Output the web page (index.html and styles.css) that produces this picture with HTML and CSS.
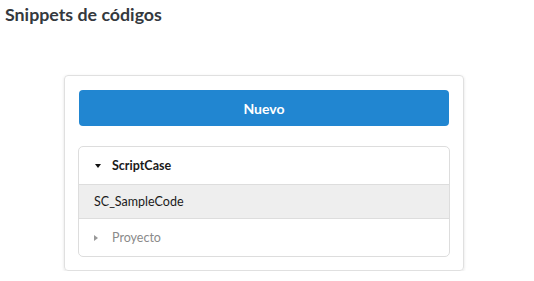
FILE: index.html
```html
<!DOCTYPE html>
<html lang="es">
<head>
    <meta charset="UTF-8">
    <title>Snippets de códigos</title>
    <link rel="stylesheet" href="styles.css">
</head>
<body>
    <h1 class="page-title">Snippets de códigos</h1>

    <div class="snippet-card">
        <button class="new-btn">Nuevo</button>

        <div class="tree">
            <div class="tree-row tree-head">
                <span class="caret caret-down"></span>
                ScriptCase
            </div>
            <div class="tree-row tree-item">SC_SampleCode</div>
            <div class="tree-row tree-closed">
                <span class="caret caret-right"></span>
                Proyecto
            </div>
        </div>
    </div>
</body>
</html>
```

FILE: styles.css
```css
body {
    font-family: Lato, 'Open Sans', Arial, sans-serif;
    margin: 0;
    padding: 0;
    background: #fff;
    color: #222;
}
.page-title {
    font-size: 17.8px;
    font-weight: 700;
    color: #34393e;
    margin: 0;
    padding: 3px 0 0 5px;
    line-height: 22px;
}
.snippet-card {
    width: 372px;
    margin: 50px 0 0 64px;
    padding: 14px 13px 13px 13px;
    border: 1px solid #e0e0e0;
    border-radius: 4px;
    box-shadow: 0 1px 3px rgba(0,0,0,0.12);
}
.new-btn {
    display: block;
    width: 370px;
    height: 36px;
    margin: 0 1px 20px 1px;
    border: none;
    border-radius: 4px;
    background: #2186d1;
    color: #fff;
    font-family: inherit;
    font-size: 14px;
    font-weight: 700;
}
.tree {
    border: 1px solid #ddd;
    border-radius: 5px;
    overflow: hidden;
}
.tree-row {
    display: flex;
    align-items: center;
    padding: 0 15px;
    font-size: 12.5px;
}
.tree-head {
    height: 37px;
    font-weight: 700;
    color: #1a1a1a;
    border-bottom: 1px solid #ddd;
}
.tree-item {
    height: 33px;
    padding-left: 15px;
    background: #eee;
    color: #1a1a1a;
    border-bottom: 1px solid #ddd;
}
.tree-closed {
    height: 37px;
    color: #8a8a8a;
}
.caret {
    display: inline-block;
    width: 0;
    height: 0;
}
.caret-down {
    margin-left: 1px;
    margin-right: 11px;
    border-left: 3px solid transparent;
    border-right: 3px solid transparent;
    border-top: 4px solid #111;
}
.caret-right {
    margin-left: 0;
    margin-right: 14px;
    border-top: 3px solid transparent;
    border-bottom: 3px solid transparent;
    border-left: 4px solid #999;
}
```
